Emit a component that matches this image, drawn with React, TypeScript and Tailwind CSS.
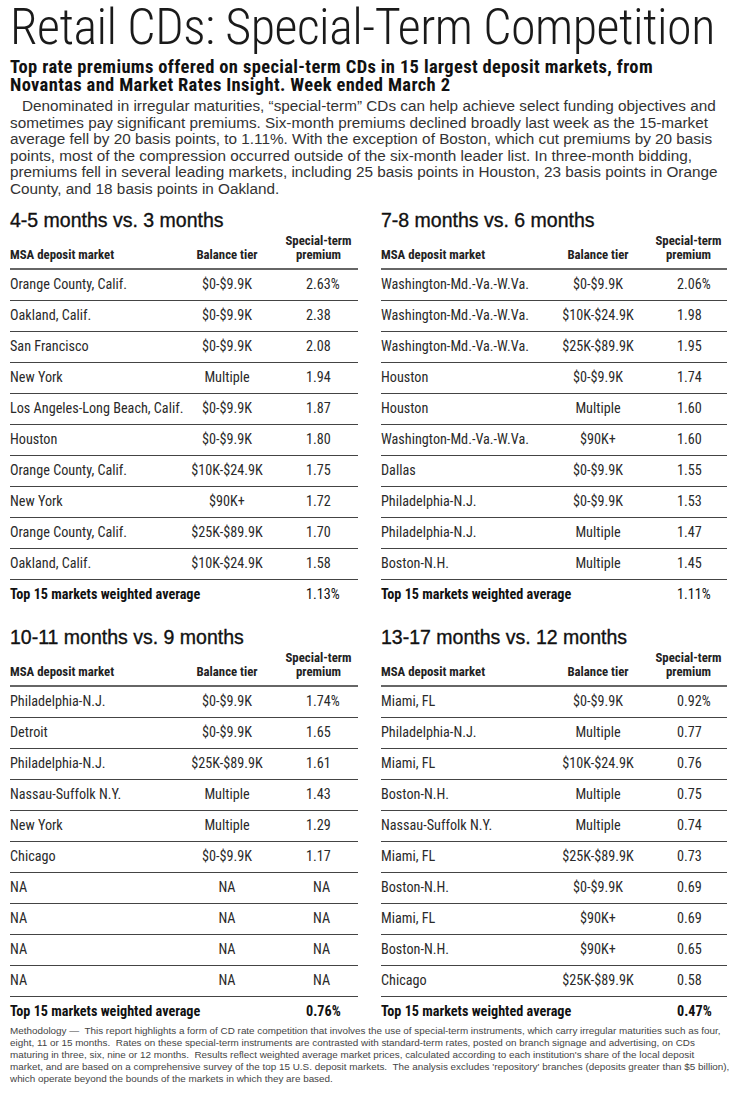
import React from "react";

type Row = [string, string, string];

type Table = {
  title: string;
  rows: Row[];
  avg: string;
  avgBold?: boolean;
};

const tables: Table[] = [
  {
    title: "4-5 months vs. 3 months",
    rows: [
      ["Orange County, Calif.", "$0-$9.9K", "2.63%"],
      ["Oakland, Calif.", "$0-$9.9K", "2.38"],
      ["San Francisco", "$0-$9.9K", "2.08"],
      ["New York", "Multiple", "1.94"],
      ["Los Angeles-Long Beach, Calif.", "$0-$9.9K", "1.87"],
      ["Houston", "$0-$9.9K", "1.80"],
      ["Orange County, Calif.", "$10K-$24.9K", "1.75"],
      ["New York", "$90K+", "1.72"],
      ["Orange County, Calif.", "$25K-$89.9K", "1.70"],
      ["Oakland, Calif.", "$10K-$24.9K", "1.58"],
    ],
    avg: "1.13%",
  },
  {
    title: "7-8 months vs. 6 months",
    rows: [
      ["Washington-Md.-Va.-W.Va.", "$0-$9.9K", "2.06%"],
      ["Washington-Md.-Va.-W.Va.", "$10K-$24.9K", "1.98"],
      ["Washington-Md.-Va.-W.Va.", "$25K-$89.9K", "1.95"],
      ["Houston", "$0-$9.9K", "1.74"],
      ["Houston", "Multiple", "1.60"],
      ["Washington-Md.-Va.-W.Va.", "$90K+", "1.60"],
      ["Dallas", "$0-$9.9K", "1.55"],
      ["Philadelphia-N.J.", "$0-$9.9K", "1.53"],
      ["Philadelphia-N.J.", "Multiple", "1.47"],
      ["Boston-N.H.", "Multiple", "1.45"],
    ],
    avg: "1.11%",
  },
  {
    title: "10-11 months vs. 9 months",
    rows: [
      ["Philadelphia-N.J.", "$0-$9.9K", "1.74%"],
      ["Detroit", "$0-$9.9K", "1.65"],
      ["Philadelphia-N.J.", "$25K-$89.9K", "1.61"],
      ["Nassau-Suffolk N.Y.", "Multiple", "1.43"],
      ["New York", "Multiple", "1.29"],
      ["Chicago", "$0-$9.9K", "1.17"],
      ["NA", "NA", "NA"],
      ["NA", "NA", "NA"],
      ["NA", "NA", "NA"],
      ["NA", "NA", "NA"],
    ],
    avg: "0.76%",
    avgBold: true,
  },
  {
    title: "13-17 months vs. 12 months",
    rows: [
      ["Miami, FL", "$0-$9.9K", "0.92%"],
      ["Philadelphia-N.J.", "Multiple", "0.77"],
      ["Miami, FL", "$10K-$24.9K", "0.76"],
      ["Boston-N.H.", "Multiple", "0.75"],
      ["Nassau-Suffolk N.Y.", "Multiple", "0.74"],
      ["Miami, FL", "$25K-$89.9K", "0.73"],
      ["Boston-N.H.", "$0-$9.9K", "0.69"],
      ["Miami, FL", "$90K+", "0.69"],
      ["Boston-N.H.", "$90K+", "0.65"],
      ["Chicago", "$25K-$89.9K", "0.58"],
    ],
    avg: "0.47%",
    avgBold: true,
  },
];

function RateTable({ t }: { t: Table }) {
  return (
    <div>
      <h3 className="font-['Liberation_Sans',sans-serif] text-[19.5px] leading-[22px] text-[#111] [-webkit-text-stroke:0.35px_#111]">
        {t.title}
      </h3>

      {/* header */}
      <div className="grid grid-cols-[177px_80px_1fr] items-end whitespace-nowrap border-b-2 border-[#666] pb-[6px] pt-[3px] text-[12.8px] font-bold leading-[14px] text-[#222]">
        <span>MSA deposit market</span>
        <span className="text-center">Balance tier</span>
        <span className="pl-[12px] text-center">
          Special-term
          <br />
          premium
        </span>
      </div>

      {/* rows */}
      {t.rows.map((r, i) => (
        <div
          key={i}
          className="grid h-[31px] grid-cols-[177px_80px_1fr] items-center border-b-[1.5px] border-[#444] text-[14.2px] text-[#2a2a2a]"
        >
          <span className="whitespace-nowrap">{r[0]}</span>
          <span className="text-center whitespace-nowrap">{r[1]}</span>
          <span className={r[2] === "NA" ? "pl-[46px]" : "pl-[39px]"}>{r[2]}</span>
        </div>
      ))}

      {/* average */}
      <div className="grid h-[31px] grid-cols-[257px_1fr] items-center text-[14.2px] text-[#111]">
        <span className="font-bold">Top 15 markets weighted average</span>
        <span className={"pl-[39px] " + (t.avgBold ? "font-bold" : "")}>{t.avg}</span>
      </div>
    </div>
  );
}

export default function App() {
  return (
    <div className="min-h-[1105px] w-[740px] bg-white pl-[10px] pr-[13px] font-['Roboto_Condensed',Roboto,sans-serif] [font-stretch:80%] text-[#222]">
      {/* TITLE */}
      <h1 className="text-[50px] font-light leading-[54px] tracking-[-0.5px] text-[#1a1a1a] whitespace-nowrap">
        Retail CDs: Special-Term Competition
      </h1>

      <p className="mt-[4px] whitespace-nowrap text-[18.5px] font-bold leading-[18px] tracking-[0.35px] text-[#111]">
        Top rate premiums offered on special-term CDs in 15 largest deposit markets, from
        <br />
        Novantas and Market Rates Insight. Week ended March 2
      </p>

      <p className="mt-[4px] font-['Liberation_Sans',sans-serif] [font-stretch:100%] text-[15.3px] leading-[16.6px] text-[#333] whitespace-nowrap">
        <span className="pl-[12px]">
          Denominated in irregular maturities, “special-term” CDs can help achieve select funding objectives and
        </span>
        <br />
        sometimes pay significant premiums. Six-month premiums declined broadly last week as the 15-market
        <br />
        average fell by 20 basis points, to 1.11%. With the exception of Boston, which cut premiums by 20 basis
        <br />
        points, most of the compression occurred outside of the six-month leader list. In three-month bidding,
        <br />
        premiums fell in several leading markets, including 25 basis points in Houston, 23 basis points in Orange
        <br />
        County, and 18 basis points in Oakland.
      </p>

      {/* TABLES */}
      <div className="mt-[11px] grid grid-cols-[348px_346px] gap-x-[23px] gap-y-[15px]">
        {tables.map((t) => (
          <RateTable key={t.title} t={t} />
        ))}
      </div>

      {/* METHODOLOGY */}
      <p className="-mt-[3px] font-['Liberation_Sans',sans-serif] [font-stretch:100%] text-[9.9px] leading-[12px] text-[#444] whitespace-nowrap">
        Methodology —&nbsp; This report highlights a form of CD rate competition that involves the use of special-term instruments, which carry irregular maturities such as four,
        <br />
        eight, 11 or 15 months.&nbsp; Rates on these special-term instruments are contrasted with standard-term rates, posted on branch signage and advertising, on CDs
        <br />
        maturing in three, six, nine or 12 months.&nbsp; Results reflect weighted average market prices, calculated according to each institution's share of the local deposit
        <br />
        market, and are based on a comprehensive survey of the top 15 U.S. deposit markets.&nbsp; The analysis excludes 'repository' branches (deposits greater than $5 billion),
        <br />
        which operate beyond the bounds of the markets in which they are based.
      </p>
    </div>
  );
}
